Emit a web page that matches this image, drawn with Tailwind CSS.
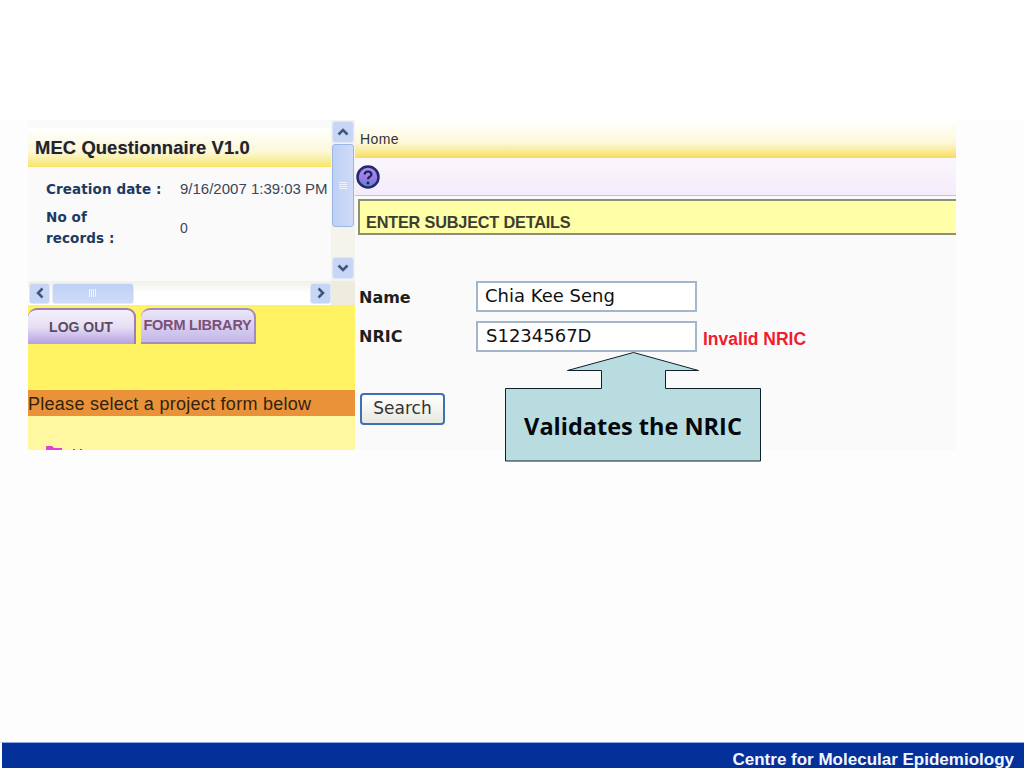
<!DOCTYPE html>
<html lang="en">
<head>
  <meta charset="UTF-8" />
  <title>Validates the NRIC</title>
  <script src="https://cdn.jsdelivr.net/npm/@tailwindcss/browser@4"></script>
</head>
<body class="bg-[#fdfdfd] font-['Liberation_Sans',sans-serif]">
  <div class="w-[1024px] h-[768px] flex flex-col overflow-hidden">
    <div class="h-[120px] bg-white"></div>

    <!-- slide screenshot -->
    <div class="relative h-[330px] w-[928px] ml-[28px] flex">
      <!-- left pane -->
      <div class="w-[327px] flex flex-col">
        <div class="h-[161px] flex">
          <div class="w-[303px] bg-[#fafafa] pt-[8px]">
            <div class="h-[39px] pl-[7px] pt-[8px] bg-gradient-to-b from-white via-[#fdf8d8] via-60% to-[#f8e462] text-[18.4px] leading-[24px] font-bold text-[#22222a] tracking-[0.1px] [text-shadow:0_0_1px_#7778]">MEC Questionnaire V1.0</div>
            <div class="flex pt-[15px] pl-[18px] h-[29px] items-center text-[#1d3a63]">
              <span class="w-[134px] shrink-0 font-['DejaVu_Sans',sans-serif] font-bold text-[13.500px] tracking-[0.1px] whitespace-nowrap">Creation date :</span>
              <span class="text-[15px] text-[#3b4658] whitespace-nowrap">9/16/2007 1:39:03 PM</span>
            </div>
            <div class="flex pt-[11px] pl-[18px] items-center text-[#1d3a63]">
              <span class="w-[134px] shrink-0 font-['DejaVu_Sans',sans-serif] font-bold text-[13.500px] tracking-[0.1px] leading-[21px]">No of<br />records :</span>
              <span class="text-[14px] text-[#3b4658]">0</span>
            </div>
          </div>
          <!-- vertical scrollbar -->
          <div class="w-[24px] bg-[#f4f3ec] flex flex-col items-center">
            <div class="w-[22px] h-[22px] mt-[1px] rounded-[3px] bg-[#c6d6f4] border border-[#dfe8fa] flex items-center justify-center">
              <svg width="12" height="8" viewBox="0 0 12 8"><path d="M1.500 6.500 6 2l4.500 4.500" fill="none" stroke="#3f5680" stroke-width="2.500"/></svg>
            </div>
            <div class="w-[22px] h-[83px] mt-[1px] rounded-[3px] bg-gradient-to-r from-[#bed0f6] to-[#cfdcf8] border border-[#9eb6e4] flex items-center justify-center">
              <svg width="10" height="10" viewBox="0 0 10 10"><path d="M1 1.500h8M1 3.500h8M1 5.500h8M1 7.500h8" stroke="#eef3fd" stroke-width="1"/></svg>
            </div>
            <div class="w-[22px] h-[22px] mt-auto mb-[2px] rounded-[3px] bg-[#c6d6f4] border border-[#dfe8fa] flex items-center justify-center">
              <svg width="12" height="8" viewBox="0 0 12 8"><path d="M1.500 1.500 6 6l4.500-4.500" fill="none" stroke="#3f5680" stroke-width="2.500"/></svg>
            </div>
          </div>
        </div>
        <!-- horizontal scrollbar -->
        <div class="h-[24px] flex bg-gradient-to-b from-[#f1f0e8] via-white to-white">
          <div class="w-[303px] flex items-center pl-[1px]">
            <div class="w-[21px] h-[21px] rounded-[3px] bg-[#c6d6f4] border border-[#dfe8fa] flex items-center justify-center">
              <svg width="8" height="12" viewBox="0 0 8 12"><path d="M6.500 1.500 2 6l4.500 4.500" fill="none" stroke="#3f5680" stroke-width="2.500"/></svg>
            </div>
            <div class="w-[82px] h-[21px] ml-[2px] rounded-[3px] bg-gradient-to-b from-[#bed0f6] to-[#cfdcf8] border border-[#e3ebfb] flex items-center justify-center">
              <svg width="10" height="10" viewBox="0 0 10 10"><path d="M1.500 1v8M3.500 1v8M5.500 1v8M7.500 1v8" stroke="#eef3fd" stroke-width="1"/></svg>
            </div>
            <div class="w-[21px] h-[21px] ml-auto rounded-[3px] bg-[#c6d6f4] border border-[#dfe8fa] flex items-center justify-center">
              <svg width="8" height="12" viewBox="0 0 8 12"><path d="M1.500 1.500 6 6l-4.500 4.500" fill="none" stroke="#3f5680" stroke-width="2.500"/></svg>
            </div>
          </div>
          <div class="w-[24px] bg-[#eeecdf]"></div>
        </div>
        <!-- tabs -->
        <div class="h-[85px] bg-[#fff263] flex items-start pt-[3px] gap-[5px]">
          <div class="w-[108px] h-[36px] rounded-t-[9px] border-t-2 border-r-2 border-[#9a7fb8] bg-gradient-to-b from-[#f4f0fb] via-[#e6dff4] to-[#b6a0e4] flex items-center justify-center text-[14px] font-bold text-[#5c4a63]">LOG OUT</div>
          <div class="w-[115px] h-[36px] rounded-t-[9px] border-t-2 border-r-2 border-b-2 border-[#a58cc0] bg-gradient-to-b from-[#eae6f6] to-[#c4b8e8] flex items-center justify-center font-bold text-[#7a4f78] text-[14.500px] tracking-[-0.2px] whitespace-nowrap">FORM LIBRARY</div>
        </div>
        <div class="h-[26px] bg-[#e99239] text-[18px] leading-[28px] text-[#33220f] tracking-[0.27px] whitespace-nowrap">Please select a project form below</div>
        <div class="flex-1 min-h-0 bg-[#fff8a0] overflow-hidden pt-[29px] pl-[17px] flex items-start gap-[8px]">
          <svg width="19" height="12" viewBox="0 0 19 12"><path d="M1 12V2q0-1 1-1h5l2 2h8v9z" fill="#e040d8"/></svg>
          <span class="text-[15px] leading-[16px] text-[#333] mt-[1px]">Home</span>
        </div>
      </div>

      <!-- right pane -->
      <div class="flex-1 bg-[#fafafa] flex flex-col">
        <div class="h-[38px] pl-[5px] pt-[10px] bg-gradient-to-b from-white via-[#fdf8d8] via-60% to-[#f8dd52] text-[14px] leading-[18px] text-[#333] tracking-[0.4px]">Home</div>
        <div class="h-[38px] bg-gradient-to-b from-[#fbf6fb] to-[#f4ecfb] border-b border-[#cdb8e4] pl-[1px] pt-[7px]">
          <svg width="24" height="24" viewBox="0 0 24 24">
            <defs>
              <linearGradient id="helpFill" x1="0" y1="0" x2="0" y2="1">
                <stop offset="0" stop-color="#b48cf0"/>
                <stop offset="0.7" stop-color="#8f78e0"/>
                <stop offset="1" stop-color="#3f8fb0"/>
              </linearGradient>
            </defs>
            <circle cx="12" cy="12" r="10.500" fill="url(#helpFill)" stroke="#1f2a6e" stroke-width="2.500"/>
            <path d="M8.500 9.500q.5-3 3.500-3t3.500 2.800q0 1.700-2 2.700-1.500.8-1.500 2.200" fill="none" stroke="#1a1f55" stroke-width="2.200"/>
            <circle cx="12" cy="18" r="1.400" fill="#1a1f55"/>
          </svg>
        </div>
        <div class="ml-[3px] mt-[3px] h-[36px] border-2 border-r-0 border-[#8f8f78] bg-[#ffffa8] pl-[6px] text-[16.300px] leading-[42px] font-bold text-[#3d3d32] tracking-[-0.2px] whitespace-nowrap">ENTER SUBJECT DETAILS</div>

        <div class="pl-[4px] pt-[46px] flex flex-col gap-[9px]">
          <div class="flex items-center h-[31px]">
            <span class="w-[117px] font-['DejaVu_Sans',sans-serif] font-bold text-[16px] text-[#1e1e1e] mt-[3px]">Name</span>
            <div class="w-[221px] h-[31px] border-2 border-[#a3b6cc] bg-white pl-[7px] font-['DejaVu_Sans',sans-serif] text-[18px] leading-[25px] text-[#111]">Chia Kee Seng</div>
          </div>
          <div class="flex items-center h-[31px]">
            <span class="w-[117px] font-['DejaVu_Sans',sans-serif] font-bold text-[16px] text-[#1e1e1e] mt-[1px]">NRIC</span>
            <div class="w-[221px] h-[31px] border-2 border-[#a3b6cc] bg-white pl-[8px] font-['DejaVu_Sans',sans-serif] text-[18px] leading-[25px] text-[#111]">S1234567D</div>
            <span class="ml-[6px] mt-[6px] font-bold text-[17.500px] text-[#f01c30] whitespace-nowrap">Invalid NRIC</span>
          </div>
        </div>
        <button class="ml-[5px] mt-[41px] w-[85px] h-[32px] rounded-[4px] border-2 border-[#3f6fb5] bg-gradient-to-b from-white to-[#e8e8e0] font-['DejaVu_Sans',sans-serif] text-[17px] text-[#333] text-center">Search</button>
      </div>

      <!-- callout over the screenshot -->
      <svg class="absolute left-[476px] top-[230px]" width="260" height="112" viewBox="0 0 260 112">
        <path d="M1.500 111V38.500H97.500V20.500H63.500L129.500 2.500 194.500 20.500H161.500V38.500H256.500V111Z" fill="#b8dce0" stroke="#10202a" stroke-width="1"/>
      </svg>
      <div class="absolute left-[477px] top-[289px] w-[256px] text-center font-['Open_Sans',sans-serif] font-bold text-[23.500px] leading-[34px] text-[#05080c] whitespace-nowrap">Validates the NRIC</div>
    </div>

    <div class="flex-1"></div>

    <!-- footer -->
    <div class="h-[26px] bg-[#04309a] border-t border-[#8ea8e8] border-l-2 border-l-white pr-[10px] pt-[8px] flex items-center justify-end text-[17px] font-bold text-[#f2f6ff]">Centre for Molecular Epidemiology</div>
  </div>
</body>
</html>
